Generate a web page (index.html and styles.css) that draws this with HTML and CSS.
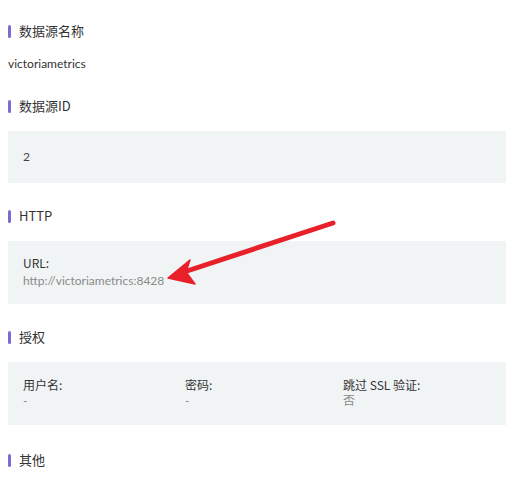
FILE: index.html
```html
<!DOCTYPE html>
<html lang="zh-CN">
<head>
<meta charset="utf-8">
<title>数据源详情</title>
<link rel="stylesheet" href="styles.css">
</head>
<body>
<div class="page">
  <h3 class="title t-first">数据源名称</h3>
  <div class="plain">victoriametrics</div>

  <h3 class="title t-after-text">数据源ID</h3>
  <div class="panel panel-id">2</div>

  <h3 class="title">HTTP</h3>
  <div class="panel panel-http">
    <div class="label">URL:</div>
    <div class="value">http://victoriametrics:8428</div>
  </div>

  <h3 class="title">授权</h3>
  <div class="panel panel-auth">
    <div class="field">
      <div class="label">用户名:</div>
      <div class="value">-</div>
    </div>
    <div class="field">
      <div class="label">密码:</div>
      <div class="value">-</div>
    </div>
    <div class="field">
      <div class="label">跳过 SSL 验证:</div>
      <div class="value">否</div>
    </div>
  </div>

  <h3 class="title t-last">其他</h3>

  <!-- annotation arrow pointing at the URL -->
  <svg class="arrow" width="513" height="484" viewBox="0 0 513 484">
    <line x1="333" y1="223" x2="184" y2="272" stroke="#e8202a" stroke-width="5" stroke-linecap="round"/>
    <polygon points="168,278 190,260 186,272 195,284" fill="#e8202a" stroke="#e8202a" stroke-width="1.5" stroke-linejoin="round"/>
  </svg>
</div>
</body>
</html>
```
FILE: styles.css
```css
html, body {
  margin: 0;
  padding: 0;
  background: #ffffff;
}

.page {
  position: relative;
  width: 513px;
  height: 484px;
  overflow: hidden;
  padding: 0 7px 0 8px;
  box-sizing: border-box;
  font-family: "Noto Sans CJK SC", "Noto Sans", sans-serif;
  color: #333333;
  font-size: 12px;
}

.title {
  margin: 23px 0 15px 0;
  display: flex;
  align-items: center;
  gap: 8px;
  height: 20px;
  line-height: 20px;
  font-size: 13px;
  font-weight: 400;
  color: #333333;
}

.title::before {
  content: "";
  width: 3px;
  height: 13px;
  border-radius: 2px;
  background: #7b6cd4;
}

.t-first {
  margin-top: 21px;
  margin-bottom: 14px;
}

.t-after-text {
  margin-top: 23px;
}

.t-last {
  margin-top: 25px;
  margin-bottom: 0;
}

/* Latin content text runs a little narrower than the CJK face */
.plain,
.panel-id,
.value {
  font-family: "Lato", "Noto Sans CJK SC", sans-serif;
}

.plain {
  line-height: 18px;
  height: 18px;
  color: #333333;
}

.panel {
  background: #f1f4f5;
  padding: 0 15px;
}

.panel-id {
  padding-top: 17px;
  padding-bottom: 17px;
  line-height: 18px;
  color: #444444;
}

.panel-http {
  padding-top: 13px;
  padding-bottom: 14px;
  line-height: 18px;
}

.panel-http .label,
.panel-http .value {
  height: 18px;
}

.label {
  color: #333333;
}

.value {
  color: #8a8a8a;
}

.panel-auth {
  display: grid;
  grid-template-columns: 162px 158px 1fr;
  padding-top: 15px;
  padding-bottom: 16px;
  line-height: 16px;
}

.panel-auth .label,
.panel-auth .value {
  height: 16px;
}

.arrow {
  position: absolute;
  left: 0;
  top: 0;
  pointer-events: none;
}
```
